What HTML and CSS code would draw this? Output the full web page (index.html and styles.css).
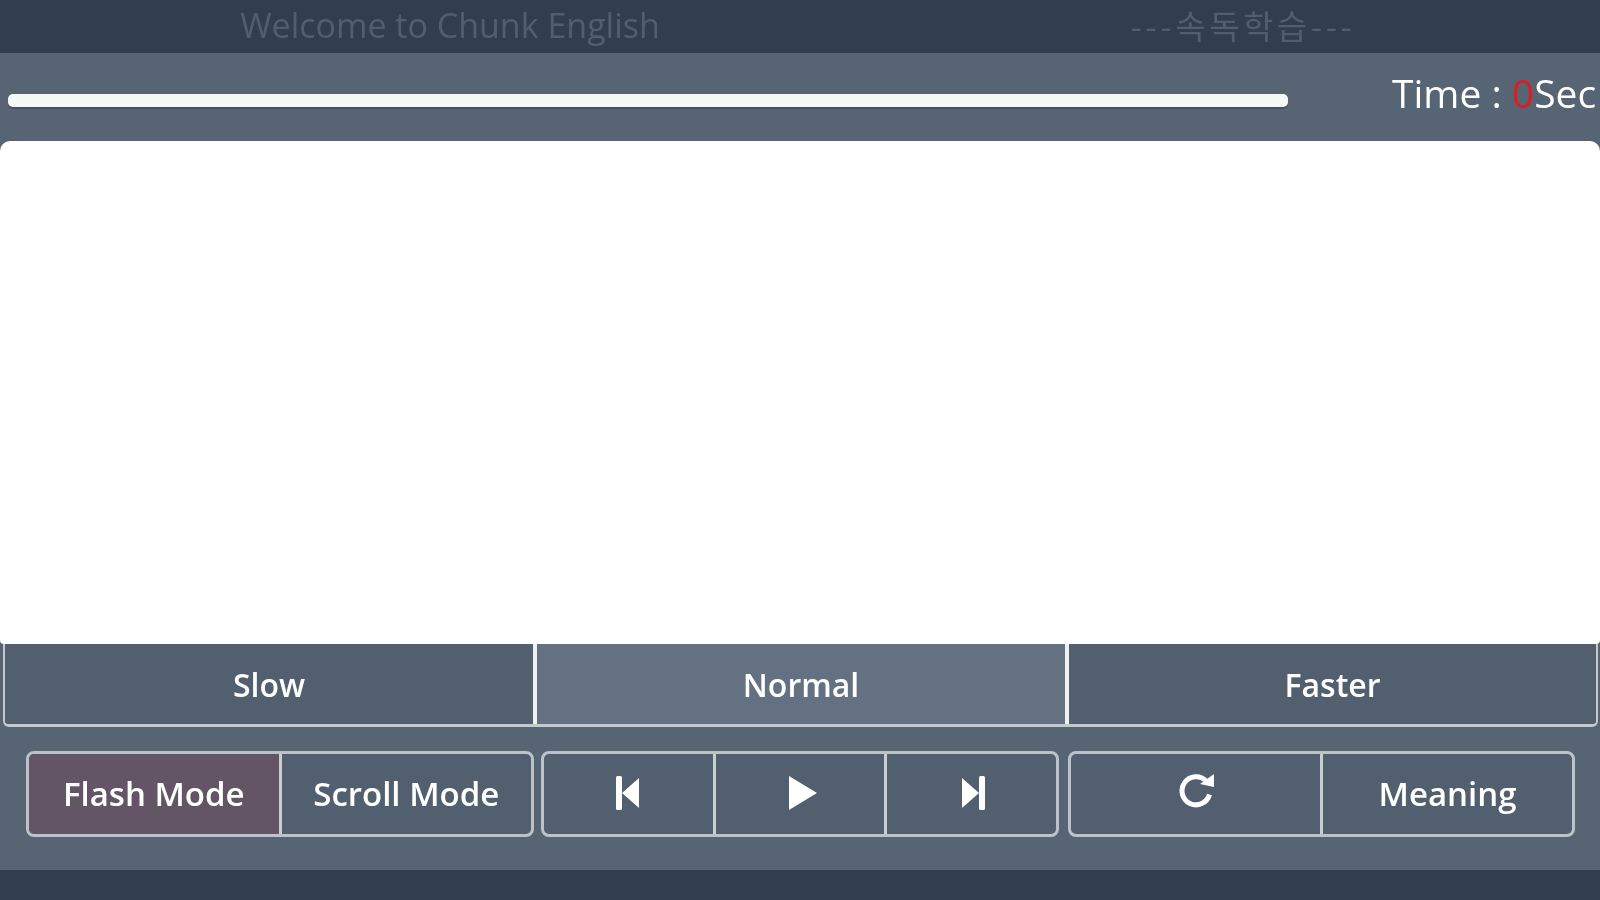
FILE: index.html
```html
<!DOCTYPE html>
<html lang="en">
<head>
<meta charset="utf-8">
<title>Chunk English</title>
<link rel="stylesheet" href="styles.css">
</head>
<body>
<div class="page">
  <header class="top">
    <div class="welcome">Welcome to Chunk English</div>
    <div class="subject">---속독학습---</div>
  </header>
  <main class="main">
    <div class="status">
      <div class="bar"></div>
      <div class="time">Time : <span class="zero">0</span>Sec</div>
    </div>
    <div class="reader"></div>
    <div class="speeds">
      <button class="speed">Slow</button>
      <button class="speed on">Normal</button>
      <button class="speed">Faster</button>
    </div>
    <div class="tools">
      <div class="group g1">
        <button class="btn active">Flash Mode</button>
        <button class="btn">Scroll Mode</button>
      </div>
      <div class="group g2">
        <button class="btn"><svg class="ic" width="24" height="36" viewBox="0 0 24 36"><rect x="0" y="1" width="6" height="34" rx="1.5"/><path d="M6 18 23 3V33Z"/></svg></button>
        <button class="btn"><svg class="ic play" width="28" height="34" viewBox="0 0 28 34"><path d="M0 0 28 17 0 34Z"/></svg></button>
        <button class="btn"><svg class="ic next" width="24" height="36" viewBox="0 0 24 36"><rect x="18" y="1" width="6" height="34" rx="1.5"/><path d="M18 18 1 3V33Z"/></svg></button>
      </div>
      <div class="group g3">
        <button class="btn"><svg class="ic up" width="37" height="37" viewBox="0 0 37 37"><path class="arc" d="M30.5 21.5A14 14 0 1 1 27 8"/><path d="M21 11 35 1V14Z"/></svg></button>
        <button class="btn">Meaning</button>
      </div>
    </div>
  </main>
  <footer class="bottom"></footer>
</div>
</body>
</html>
```
FILE: styles.css
```css
* { box-sizing: border-box; }
html, body { margin: 0; height: 100%; overflow: hidden; background: #323e4f; }
body { font-family: "Open Sans", "Noto Sans CJK KR", sans-serif; color: #fff; }
.page { display: flex; flex-direction: column; height: 900px; width: 1600px; filter: blur(0.6px); }

.top { flex: 0 0 53px; display: flex; align-items: center; background: #323e4f; color: #525e6e; font-size: 34px; }
.welcome { flex: 0 0 900px; text-align: center; padding-bottom: 3px; }
.subject { flex: 0 0 686px; text-align: center; font-family: "Noto Sans CJK KR", "Open Sans", sans-serif; font-size: 33px; letter-spacing: 3.5px; padding-bottom: 3px; }

.main { flex: 0 0 817px; display: flex; flex-direction: column; background: #576473; }

.status { flex: 0 0 88px; display: flex; align-items: center; padding-left: 8px; overflow: hidden; }
.bar { flex: 0 0 1280px; height: 13px; margin-top: 7px; border-radius: 5px; background: #f6f8f7; box-shadow: 0 2px 0 #474f66; }
.time { margin-left: 104px; white-space: nowrap; font-size: 39px; font-weight: 500; line-height: 40px; margin-bottom: 9px; }
.zero { color: #e21b1f; }

.reader { flex: 0 0 503px; background: #fff; border-radius: 10px 10px 4px 4px; }

.speeds { flex: 0 0 83px; display: flex; margin: 0 2px 0 3px; border: solid #c3c9cd; border-width: 0 2px 3px; border-radius: 0 0 6px 6px; overflow: hidden; }
.speed { flex: 0 0 532px; font: 600 32px "Open Sans", sans-serif; color: #fff; background: #525f6f; border: 0; border-right: 4px solid #eef0f1; padding: 0; }
.speed:last-child { flex: 1 1 0; border-right: 0; }
.speed.on { background: #647182; }

.tools { flex: 1 1 auto; display: flex; padding: 24px 25px 33px 26px; }
.group { display: flex; border: 3px solid #bcc3c8; border-radius: 8px; overflow: hidden; height: 86px; background: #525f6f; }
.g1 { flex: 0 0 508px; }
.g2 { flex: 0 0 518px; margin-left: 7px; }
.g3 { flex: 0 0 507px; margin-left: 9px; }
.btn { flex: 1 1 0; display: flex; align-items: center; justify-content: center; font: 600 33px "Open Sans", sans-serif; color: #fff; background: transparent; border: 0; border-right: 3px solid #c9ced1; padding: 0 0 2px; }
.btn:last-child { border-right: 0; }
.btn.active { background: #635565; }
.ic { fill: #fff; display: block; }
.ic.play { margin-left: 6px; }
.ic.next { margin-left: 2px; }
.ic.up { margin: 0 0 4px 3px; }
.arc { fill: none; stroke: #fff; stroke-width: 5; }

.bottom { flex: 0 0 30px; background: #323e4f; }
```
